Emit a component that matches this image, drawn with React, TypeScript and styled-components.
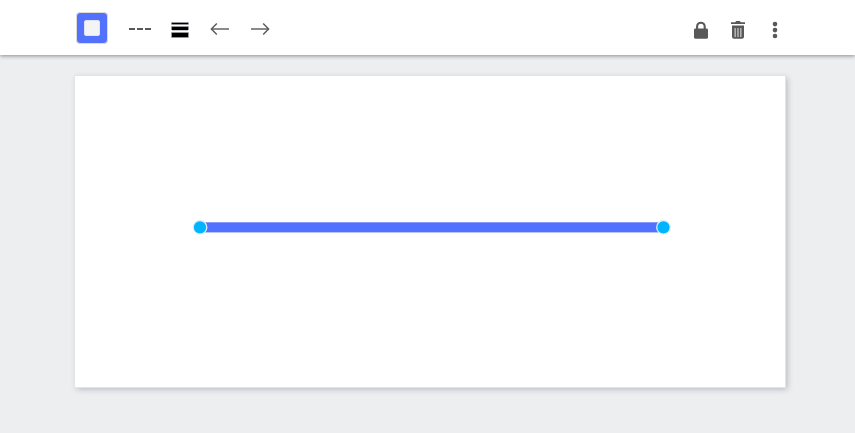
import React from "react";
import styled, { createGlobalStyle } from "styled-components";

const GlobalStyle = createGlobalStyle`
  * { box-sizing: border-box; }
  body { margin: 0; background: #edeef0; font-family: Roboto, sans-serif; overflow: hidden; }
`;

const Editor = styled.div`
  display: flex;
  flex-direction: column;
  height: 100vh;
  min-width: 855px;
`;

const Toolbar = styled.header`
  display: flex;
  justify-content: space-between;
  align-items: flex-start;
  flex: none;
  height: 55px;
  padding: 12px 64px 0 76px;
  background: #fff;
  box-shadow: 0 1px 4px rgba(0, 0, 0, 0.42);
`;

const ToolGroup = styled.div<{ $gap: number }>`
  display: flex;
  align-items: center;
  gap: ${({ $gap }) => $gap}px;
`;

const ToolButton = styled.button`
  display: block;
  width: 32px;
  height: 32px;
  padding: 0;
  border: 0;
  background: none;
  color: #58585a;

  svg { display: block; }
`;

const ColorButton = styled.button`
  display: grid;
  place-items: center;
  width: 32px;
  height: 32px;
  margin-right: 8px;
  padding: 0;
  border: 1px solid #dedcd4;
  border-radius: 4px;
  background: #5271ff;
`;

const Swatch = styled.span`
  width: 16px;
  height: 16px;
  border: 1px solid #dfe3f8;
  border-radius: 2px;
  background: #f4f4f4;
`;

const Workspace = styled.main`
  flex: 1;
  padding: 21px 70px 46px 75px;
`;

const Artboard = styled.section`
  display: flex;
  align-items: flex-start;
  height: 311px;
  width: 710px;
  padding: 143px 0 0 117px;
  background: #fff;
  box-shadow: 0 0 0 1px #e4e5e8, 2px 2px 6px rgba(45, 50, 60, 0.3);

  svg { display: block; }
`;

const DashIcon = () => (
  <svg width="32" height="32" viewBox="124 12 32 32">
    <path d="M129 29h6m2 0h6m2 0h6" stroke="currentColor" strokeWidth="2" />
  </svg>
);

const WeightIcon = () => (
  <svg width="32" height="32" viewBox="164 12 32 32">
    <path d="M171 22h18v3h-18zM171 26h18v4h-18zM171 32h18v6h-18z" fill="#b8b8bb" />
    <path d="M172 23h16v1h-16zM172 27h16v3h-16zM172 33h16v4h-16z" fill="#000" stroke="#000" strokeWidth="0.4" />
  </svg>
);

const ArrowIcon = ({ right = false }: { right?: boolean }) => (
  <svg width="32" height="32" viewBox="0 0 32 32" fill="none" stroke="currentColor" strokeWidth="1.4">
    <path d={right ? "M7 17h17.7" : "M25 17H7.4"} />
    <path d={right ? "M19.2 11.6 24.6 17l-5.4 5.4" : "M12.8 11.6 7.4 17l5.4 5.4"} />
  </svg>
);

const LockIcon = () => (
  <svg width="32" height="32" viewBox="685 12 32 32">
    <path d="M697.1 29v-2.5a3.8 3.8 0 0 1 7.6 0V29" fill="none" stroke="currentColor" strokeWidth="2.1" />
    <rect x="694" y="28.5" width="14" height="10.2" rx="1.4" fill="currentColor" />
  </svg>
);

const TrashIcon = () => (
  <svg width="32" height="32" viewBox="722 12 32 32">
    <path d="M731 22.2h4.2l1-1.2h3.6l1 1.2h4.2v1.9h-14zM732 25.6h12v11.1a2 2 0 0 1-2 2h-8a2 2 0 0 1-2-2z" fill="currentColor" />
    <path d="M735.2 28v9M738 28v9M740.8 28v9" stroke="#b0b0b1" strokeWidth="1.6" />
  </svg>
);

const MoreIcon = () => (
  <svg width="32" height="32" viewBox="759 12 32 32" fill="currentColor">
    <circle cx="775" cy="24.1" r="2.3" />
    <circle cx="775" cy="30.1" r="2.3" />
    <circle cx="775" cy="36" r="2.3" />
  </svg>
);

const SelectedLine = () => (
  <svg width="480" height="17" viewBox="192 219 480 17">
    <rect x="200" y="222.3" width="463.5" height="10.1" fill="#5271ff" />
    <circle cx="200" cy="227.3" r="6.8" fill="#00b4ff" stroke="#e2edf9" strokeWidth="1.3" />
    <circle cx="663.5" cy="227.3" r="6.8" fill="#00b4ff" stroke="#e2edf9" strokeWidth="1.3" />
  </svg>
);

export default function App() {
  return (
    <>
      <GlobalStyle />
      <Editor>
        <Toolbar>
          <ToolGroup $gap={8}>
            <ColorButton aria-label="Line color"><Swatch /></ColorButton>
            <ToolButton aria-label="Line style"><DashIcon /></ToolButton>
            <ToolButton aria-label="Line weight"><WeightIcon /></ToolButton>
            <ToolButton aria-label="Line start"><ArrowIcon /></ToolButton>
            <ToolButton aria-label="Line end"><ArrowIcon right /></ToolButton>
          </ToolGroup>
          <ToolGroup $gap={5}>
            <ToolButton aria-label="Lock"><LockIcon /></ToolButton>
            <ToolButton aria-label="Delete"><TrashIcon /></ToolButton>
            <ToolButton aria-label="More"><MoreIcon /></ToolButton>
          </ToolGroup>
        </Toolbar>
        <Workspace>
          <Artboard aria-label="Artboard"><SelectedLine /></Artboard>
        </Workspace>
      </Editor>
    </>
  );
}
